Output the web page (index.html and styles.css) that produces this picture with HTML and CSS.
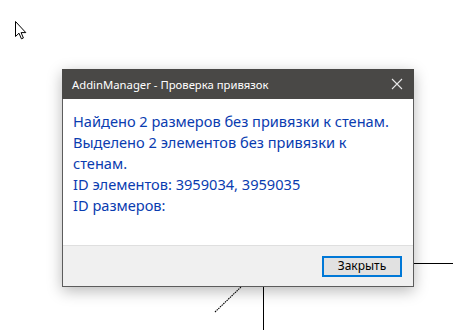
FILE: index.html
```html
<!DOCTYPE html>
<html lang="ru">
<head>
  <meta charset="UTF-8">
  <meta name="viewport" content="width=device-width, initial-scale=1.0">
  <title>AddinManager - Проверка привязок</title>
  <link rel="stylesheet" href="styles.css">
</head>
<body>
  <div class="desktop">
    <svg class="drawing" width="453" height="330" viewBox="0 0 453 330">
      <line x1="400" y1="263.5" x2="453" y2="263.5" stroke="#000" stroke-width="1"/>
      <line x1="263.5" y1="280" x2="263.5" y2="330" stroke="#000" stroke-width="1"/>
      <line x1="215" y1="312" x2="241" y2="287" stroke="#000" stroke-width="1.1" stroke-dasharray="1.5 0.8"/>
    </svg>

    <svg class="cursor" width="12" height="20" viewBox="0 0 12 20">
      <path d="M0.5 0.5 L0.5 15.5 L4 12.2 L6.4 17.8 L8.4 17 L6.1 11.6 L10.8 11.6 Z" fill="#fff" stroke="#000" stroke-width="1" stroke-linejoin="miter"/>
    </svg>

    <div class="dialog">
      <div class="titlebar">
        <span class="title">AddinManager - Проверка привязок</span>
        <svg class="close" width="12" height="12" viewBox="0 0 12 12">
          <path d="M1 1 L11 11 M11 1 L1 11" stroke="#e8e8e8" stroke-width="1.1"/>
        </svg>
      </div>
      <div class="content">
        <p>Найдено 2 размеров без привязки к стенам.</p>
        <p>Выделено 2 элементов без привязки к стенам.</p>
        <p>ID элементов: 3959034, 3959035</p>
        <p>ID размеров:</p>
      </div>
      <div class="footer">
        <button class="btn">Закрыть</button>
      </div>
    </div>
  </div>
</body>
</html>
```

FILE: styles.css
```css
body { margin: 0; background: #fff; font-family: 'Noto Sans', 'Open Sans', sans-serif; }
.desktop { position: relative; width: 453px; height: 330px; overflow: hidden; padding-top: 69px; box-sizing: border-box; }
.drawing { position: absolute; left: 0; top: 0; }
.cursor { position: absolute; left: 15px; top: 21px; }
.dialog { position: relative; z-index: 1; margin-left: 62px; width: 352px; height: 218px; box-sizing: border-box; border: 1px solid #5c5c5c; border-top: none; background: #fff; display: flex; flex-direction: column; box-shadow: 0 4px 14px rgba(0,0,0,0.28); }
.titlebar { height: 30px; background: #494846; color: #fff; display: flex; align-items: center; justify-content: space-between; padding: 0 11px 0 10px; flex-shrink: 0; margin: 0 -1px; }
.title { font-size: 11.3px; }
.close { display: block; }
.content { flex: 1; padding: 12px 11px 0 10px; color: #0a3cb0; font-size: 14.6px; line-height: 21px; }
.content p { margin: 0; width: 324px; }
.footer { height: 41px; background: #f0f0f0; border-top: 1px solid #dfdfdf; display: flex; align-items: center; justify-content: flex-end; padding-right: 11px; box-sizing: border-box; }
.btn { width: 80px; height: 21px; box-sizing: border-box; border: 2px solid #0078d7; background: #e1e1e1; font-family: 'Noto Sans', sans-serif; font-size: 12px; color: #000; padding: 0; line-height: 16px; }
```
